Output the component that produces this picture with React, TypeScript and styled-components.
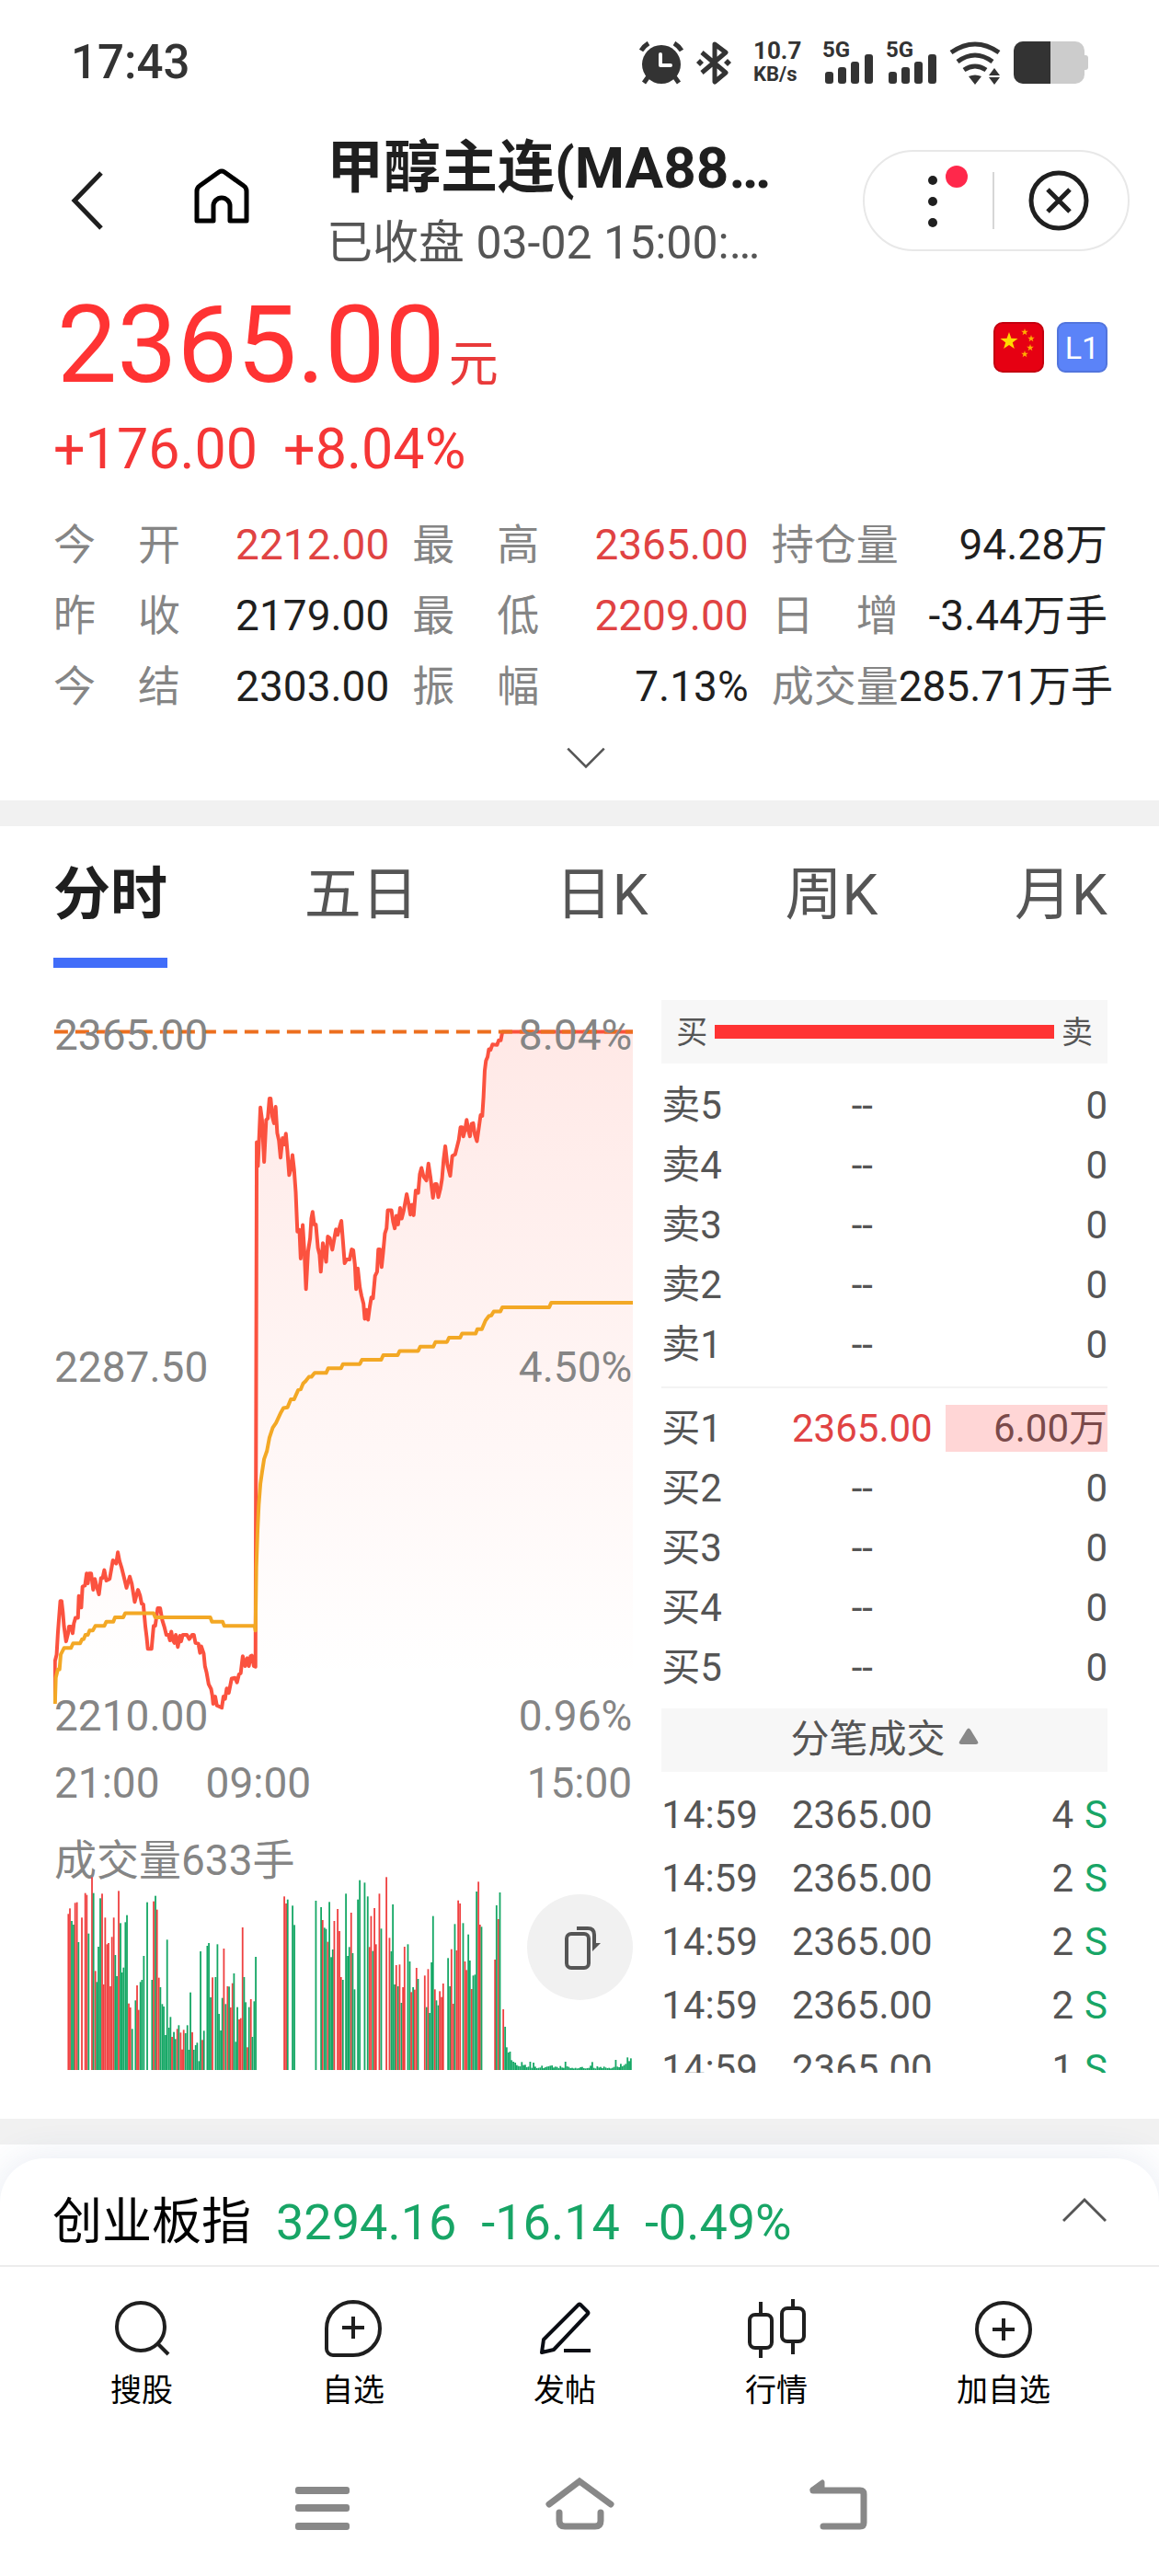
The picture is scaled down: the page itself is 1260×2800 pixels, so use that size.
import React from "react";
import styled, { createGlobalStyle, css } from "styled-components";

const color = {
  ink: "#1f1f1f",
  text: "#555555",
  muted: "#858585",
  rise: "#e93a3a",
  riseStrong: "#ff3333",
  fall: "#18a566",
  line: "#ececec",
  band: "#f1f1f1",
  panel: "#f7f7f7",
  accent: "#416df9",
  status: "#333333",
};

const GlobalStyle = createGlobalStyle`
  *, *::before, *::after { box-sizing: border-box; }
  body {
    margin: 0;
    background: #fff;
    color: ${color.ink};
    font-family: Roboto, "Noto Sans CJK SC", sans-serif;
  }
  button {
    margin: 0;
    padding: 0;
    border: 0;
    background: none;
    color: inherit;
    font: inherit;
    cursor: pointer;
  }
  svg { display: block; }
`;

const Page = styled.div`
  display: flex;
  flex-direction: column;
  overflow: hidden;
`;

/* ---------- status bar ---------- */

const StatusBar = styled.div`
  display: flex;
  align-items: center;
  justify-content: space-between;
  height: 136px;
  padding: 0 76px 0 77px;
  color: ${color.status};
`;

const Clock = styled.time`
  font-size: 51px;
  line-height: 60px;
  font-weight: 500;
`;

const StatusIcons = styled.div`
  display: flex;
  align-items: center;
`;

const StatusItem = styled.div<{ $before: number }>`
  margin-left: ${(p) => p.$before}px;
`;

const NetSpeed = styled.div`
  width: 56px;
  font-weight: 700;
  font-size: 26px;
  line-height: 26px;
  small {
    display: block;
    font-size: 22px;
    line-height: 26px;
  }
`;

const Signal = styled.div`
  width: 55px;
  font-weight: 700;
  font-size: 24px;
  line-height: 18px;
  svg { margin: -4px 0 0 3px; }
`;

/* ---------- header ---------- */

const Header = styled.header`
  display: flex;
  align-items: center;
  height: 166px;
  padding: 0 32px 2px 57px;
`;

const HeaderButton = styled.button`
  display: grid;
  place-items: center;
  width: 76px;
  height: 90px;
  margin-right: 70px;
`;

const TitleBlock = styled.div`
  flex: 1;
  min-width: 0;
  margin-left: 6px;
  padding-top: 6px;
  white-space: nowrap;
`;

const Title = styled.h1`
  margin: 0;
  font-size: 62px;
  line-height: 86px;
  font-weight: 700;
`;

const Subtitle = styled.p`
  margin: 0;
  font-size: 50px;
  line-height: 76px;
  color: ${color.text};
`;

const Capsule = styled.div`
  display: flex;
  align-items: center;
  width: 290px;
  height: 110px;
  padding-right: 6px;
  border: 2px solid #e8e8e8;
  border-radius: 55px;
`;

const CapsuleButton = styled.button`
  flex: 1;
  display: grid;
  place-items: center;
  height: 100%;
`;

const CapsuleDivider = styled.span`
  width: 2px;
  height: 62px;
  background: #d6d6d6;
`;

/* ---------- quote ---------- */

const Quote = styled.section`
  padding: 0 56px 0 58px;
`;

const PriceRow = styled.div`
  display: flex;
  align-items: center;
  justify-content: space-between;
`;

const Price = styled.div`
  padding-left: 4px;
  font-size: 116px;
  line-height: 146px;
  color: ${color.riseStrong};
  small {
    margin-left: 4px;
    font-size: 54px;
    line-height: 60px;
    color: ${color.rise};
  }
`;

const Badges = styled.div`
  display: flex;
  gap: 14px;
  padding-top: 4px;
`;

const LevelBadge = styled.span`
  width: 55px;
  height: 55px;
  border: 2px solid #5275dd;
  border-radius: 9px;
  background: #5b83f8;
  color: #fff;
  font-size: 34px;
  line-height: 52px;
  text-align: center;
`;

const Change = styled.div`
  display: flex;
  gap: 28px;
  font-size: 61px;
  line-height: 80px;
  color: #f53636;
`;

const Stats = styled.dl`
  display: grid;
  grid-template-columns: repeat(3, minmax(0, 1fr));
  column-gap: 25px;
  margin: 26px 0 0;
  font-size: 46px;
  line-height: 77px;
`;

const Stat = styled.div`
  display: flex;
  justify-content: space-between;
  white-space: nowrap;
  dt {
    flex: none;
    width: 138px;
    color: ${color.muted};
    text-align-last: justify;
  }
`;

const StatValue = styled.dd<{ $rise?: boolean }>`
  margin: 0;
  color: ${(p) => (p.$rise ? "#e04343" : color.ink)};
`;

const ExpandButton = styled.button`
  display: grid;
  place-items: center;
  width: 100%;
  height: 77px;
  margin-bottom: 8px;
  padding-left: 12px;
`;

const Band = styled.div`
  height: 28px;
  background: ${color.band};
`;

/* ---------- tabs ---------- */

const Tabs = styled.nav`
  display: flex;
  justify-content: space-between;
  padding: 0 56px 0 58px;
`;

const Tab = styled.button<{ $active?: boolean }>`
  height: 154px;
  padding-top: 6px;
  border-bottom: 11px solid transparent;
  font-size: 62px;
  line-height: 90px;
  color: ${color.text};
  ${(p) =>
    p.$active &&
    css`
      border-color: ${color.accent};
      color: ${color.ink};
      font-weight: 700;
    `}
`;

/* ---------- market ---------- */

const Market = styled.section`
  display: grid;
  grid-template-columns: minmax(0, 13fr) minmax(0, 10fr);
  column-gap: 31px;
  padding: 35px 56px 50px 58px;
`;

const ChartColumn = styled.div`
  padding-top: 11px;
  font-size: 46px;
  line-height: 54px;
  color: ${color.muted};
`;

const PriceChart = styled.div`
  position: relative;
  svg {
    width: 100%;
    height: 794px;
  }
`;

const AxisLabel = styled.span<{ $at: "top" | "middle" | "bottom"; $side: "left" | "right" }>`
  position: absolute;
  ${(p) => p.$side}: 1px;
  ${(p) => p.$at === "top" && "top: 0;"}
  ${(p) => p.$at === "middle" && "top: calc(49% - 28px);"}
  ${(p) => p.$at === "bottom" && "bottom: 0;"}
`;

const TimeAxis = styled.div`
  display: flex;
  gap: 50px;
  margin: 19px 0 34px;
  padding: 0 1px;
  span:last-child { margin-left: auto; }
`;

const VolumeTitle = styled.div`
  line-height: 46px;
  padding-left: 1px;
`;

const VolumeChart = styled.div`
  position: relative;
  > svg {
    width: 100%;
    height: 206px;
    overflow: visible;
  }
`;

const RotateButton = styled.button`
  position: absolute;
  top: 14px;
  right: 0;
  display: grid;
  place-items: center;
  width: 115px;
  height: 115px;
  border-radius: 50%;
  background: #f1f1f1;
`;

/* ---------- order book ---------- */

const Book = styled.div`
  font-size: 42px;
  color: ${color.text};
`;

const Ratio = styled.div`
  display: flex;
  align-items: center;
  gap: 8px;
  height: 69px;
  padding: 0 16px;
  background: ${color.panel};
  font-size: 34px;
  line-height: 66px;
`;

const RatioBar = styled.span`
  flex: 1;
  height: 15px;
  background: ${color.riseStrong};
`;

const Levels = styled.table<{ $row: number }>`
  width: 100%;
  border-collapse: collapse;
  table-layout: fixed;
  line-height: 51px;
  td, th {
    height: ${(p) => p.$row}px;
    padding: 0;
    font-weight: 400;
    text-align: left;
    white-space: nowrap;
  }
  th { width: 29%; }
`;

const PriceCell = styled.td<{ $rise?: boolean }>`
  && {
    width: 32%;
    text-align: center;
  }
  color: ${(p) => (p.$rise ? "#e04343" : "inherit")};
`;

const QtyCell = styled.td`
  && {
    padding-left: 13px;
    text-align: right;
  }
`;

const Depth = styled.span<{ $filled?: boolean }>`
  display: block;
  ${(p) =>
    p.$filled &&
    css`
      background: #ffd6d6;
      color: #7a4a4a;
    `}
`;

const SellSide = styled.div`
  padding: 13px 0;
  border-bottom: 2px solid #f3f3f3;
`;

const BuySide = styled.div`
  padding: 11px 0 12px;
`;

const TradesToggle = styled.button`
  display: flex;
  align-items: center;
  justify-content: center;
  gap: 14px;
  width: 100%;
  height: 69px;
  padding-bottom: 10px;
  background: ${color.panel};
`;

const Trades = styled.div`
  height: 327px;
  padding-top: 12px;
  overflow: hidden;
`;

const Side = styled.span`
  margin-left: 12px;
  color: ${color.fall};
`;

/* ---------- bottom sheet ---------- */

const Sheet = styled.footer`
  margin-top: 15px;
  border-radius: 48px 48px 0 0;
  background: #fff;
  box-shadow: 0 0 40px rgba(50, 80, 150, 0.12);
`;

const IndexRow = styled.div`
  display: flex;
  align-items: flex-start;
  gap: 27px;
  height: 118px;
  padding: 38px 57px 0;
  border-bottom: 2px solid ${color.line};
  font-size: 54px;
  line-height: 64px;
  color: ${color.fall};
  white-space: nowrap;
`;

const IndexName = styled.span`
  color: #000;
`;

const SheetToggle = styled.button`
  display: grid;
  place-items: center;
  height: 36px;
  margin-left: auto;
`;

const Actions = styled.nav`
  display: flex;
  justify-content: space-between;
  padding: 35px 118px 0 120px;
`;

const Action = styled.button`
  display: flex;
  flex-direction: column;
  align-items: center;
  gap: 13px;
  font-size: 34px;
  line-height: 44px;
  color: #000;
`;

const SystemNav = styled.div`
  display: flex;
  justify-content: center;
  gap: 200px;
  padding: 71px 0 45px;
  color: #888;
`;

/* ---------- data ---------- */

const stats: { name: string; value: string; rise?: boolean }[] = [
  { name: "今开", value: "2212.00", rise: true },
  { name: "最高", value: "2365.00", rise: true },
  { name: "持仓量", value: "94.28万" },
  { name: "昨收", value: "2179.00" },
  { name: "最低", value: "2209.00", rise: true },
  { name: "日增", value: "-3.44万手" },
  { name: "今结", value: "2303.00" },
  { name: "振幅", value: "7.13%" },
  { name: "成交量", value: "285.71万手" },
];

const tabs = ["分时", "五日", "日K", "周K", "月K"];

type Level = { name: string; price: string; qty: string; filled?: boolean };

const sells: Level[] = ["卖5", "卖4", "卖3", "卖2", "卖1"].map((name) => ({ name, price: "--", qty: "0" }));

const buys: Level[] = [
  { name: "买1", price: "2365.00", qty: "6.00万", filled: true },
  { name: "买2", price: "--", qty: "0" },
  { name: "买3", price: "--", qty: "0" },
  { name: "买4", price: "--", qty: "0" },
  { name: "买5", price: "--", qty: "0" },
];

const trades = ["4", "2", "2", "2", "1"];

const nightPrice =
  "133,2772 134,2647 138,2627 141,2562 144,2512 147,2464 150,2464 153,2497 156,2542 161,2587 166,2562 168,2542 173,2542 177,2562 180,2532 184,2515 190,2515 192,2449 198,2484 201,2420 207,2417 211,2380 214,2410 217,2380 222,2380 227,2430 231,2397 236,2422 241,2444 246,2394 250,2394 254,2370 259,2402 267,2397 275,2340 283,2350 287,2316 291,2342 296,2362 302,2392 308,2424 316,2390 321,2412 328,2467 336,2430 341,2447 345,2472 349,2474 354,2542 357,2572 360,2610 369,2610 374,2540 378,2540 384,2486 390,2486 395,2522 400,2542 405,2567 410,2567 414,2584 417,2557 421,2584 425,2592 428,2567 433,2604 438,2570 441,2587 445,2567 455,2567 461,2580 468,2567 472,2567 476,2592 483,2594 487,2622 490,2602 496,2624 499,2662 503,2682 508,2717 514,2732 517,2752 519,2777 524,2755 528,2782 540,2789 544,2755 548,2762 552,2730 557,2744 564,2700 572,2698 577,2712 582,2687 586,2684 591,2632 597,2662 602,2638 606,2662 610,2632 613,2630 618,2662 622,2664";

const dayPrice =
  "625,1068 628,1140 634,962 638,1000 643,1128 648,1000 652,995 656,935 659,935 663,990 667,1010 671,960 675,1040 679,1062 683,1115 688,1055 692,1075 696,1042 700,1100 704,1168 708,1150 712,1107 716,1150 720,1220 724,1340 729,1335 732,1422 737,1320 741,1400 745,1515 750,1400 755,1360 758,1300 761,1280 765,1318 769,1318 774,1390 778,1410 781,1462 786,1375 790,1400 794,1432 798,1355 803,1360 809,1395 814,1360 818,1333 822,1350 827,1325 831,1307 835,1370 839,1436 844,1425 851,1425 856,1394 860,1396 864,1440 867,1515 871,1452 876,1510 880,1535 885,1560 888,1605 892,1578 896,1608 900,1570 904,1540 908,1543 913,1475 918,1462 921,1394 925,1394 929,1448 933,1400 937,1345 941,1330 944,1275 953,1275 957,1310 961,1330 965,1292 969,1318 974,1268 978,1300 983,1275 990,1226 994,1250 999,1288 1003,1258 1007,1290 1012,1215 1018,1222 1022,1165 1026,1146 1031,1172 1038,1184 1043,1133 1048,1175 1054,1237 1059,1195 1063,1195 1067,1235 1072,1210 1076,1180 1080,1120 1084,1080 1089,1135 1096,1170 1101,1110 1108,1105 1113,1080 1117,1060 1121,1022 1125,1022 1128,1050 1132,1030 1136,1000 1140,1030 1144,1050 1148,1012 1152,1010 1156,1045 1161,1065 1165,1030 1170,985 1174,988 1177,930 1180,850 1183,820 1187,808 1190,785 1194,787 1199,770 1210,772 1214,758 1219,758 1223,732 1541,732";

const averagePrice =
  "134,2777 136,2697 141,2672 145,2672 148,2627 156,2607 173,2607 178,2593 195,2593 200,2580 204,2580 208,2567 214,2567 218,2554 226,2554 232,2540 254,2540 259,2527 276,2527 280,2514 300,2514 305,2501 374,2501 378,2514 512,2514 516,2527 542,2527 546,2540 620,2540 622,2554 624,2362 627,2252 630,2172 634,2107 638,2072 643,2032 650,2007 656,1967 664,1937 672,1922 684,1890 690,1877 700,1875 708,1850 716,1850 726,1822 732,1820 738,1802 744,1795 752,1782 758,1782 766,1770 794,1770 799,1756 830,1756 835,1743 876,1743 881,1730 928,1730 933,1716 968,1716 973,1703 1018,1703 1023,1690 1055,1690 1060,1676 1088,1676 1093,1663 1120,1663 1125,1650 1158,1650 1162,1637 1173,1637 1182,1610 1190,1597 1196,1595 1202,1583 1218,1583 1223,1570 1337,1570 1342,1556 1541,1556";

/* One entry per minute: direction, x, top of the bar. */
const volumeNight =
  "r43,148 r48,130 g54,171 g60,183 r65,112 r71,110 g76,240 r87,160 r98,80 r103,86 g109,212 r120,28 g125,80 r131,334 g136,370 g141,255 g147,97 r153,82 r158,378 r163,160 r169,247 r174,243 r180,384 r185,223 r191,160 g196,282 g201,351 r207,73 g213,178 g218,339 g223,323 g229,175 g234,152 r240,440 r245,453 g251,523 g262,430 r267,381 r272,461 g278,370 g283,363 g289,285 g300,110 g316,363 r321,107 g327,89 r332,134 r338,356 g343,387 g349,442 g354,450 g360,543 g365,232 g371,519 g376,484 r381,549 g387,533 g392,556 r398,523 g403,511 r409,535 r414,590 r419,526 g425,537 g431,511 g436,591 g441,404 r447,534 g452,591 g458,576 g463,568 g469,628 g474,270 r480,559 g485,529 g496,252 g501,243 g507,420 r513,355 g523,354 g529,247 g534,474 g540,528 g545,422 r550,261 g556,442 r562,384 g567,385 r572,453 r578,374 g583,342 g589,565 g594,452 r600,492 r605,488 r611,192 g616,354 g621,436 r627,583 g632,452 r638,426 g643,549 g649,433 g654,288";

const volumeDay =
  "r747,91 r753,114 g758,101 g774,121 g780,184 g850,105 g867,126 r872,168 g878,193 g883,197 r889,239 g894,109 g900,289 g905,264 r910,171 r921,132 r927,204 r932,354 g938,363 g948,82 g954,285 g959,256 r965,144 g970,276 g976,394 g987,101 g993,38 g1009,46 g1019,91 r1025,256 r1030,155 g1036,269 r1041,129 r1046,247 r1057,82 g1063,196 r1080,28 r1090,226 g1096,270 g1101,117 g1107,378 r1112,315 g1118,384 r1123,313 g1129,438 r1134,387 r1139,255 g1150,247 g1156,303 r1161,403 g1167,387 r1172,395 r1178,324 g1183,360 r1205,349 g1211,452 r1216,328 g1221,471 g1227,306 g1232,155 r1238,394 g1243,430 g1249,446 r1254,400 r1260,419 r1265,375 g1281,292 g1287,384 r1292,263 r1298,441 g1303,181 r1309,267 r1314,104 r1320,114 g1330,178 r1336,303 r1341,331 g1347,215 g1352,300 r1358,393 g1363,349 g1369,346 g1374,75 r1380,43 r1385,183 g1390,190 r1434,297 g1439,120 r1445,165 g1450,78 r1461,459 g1467,516 g1472,583 g1478,600 g1483,597 g1488,625 g1494,630 g1500,633";

/* Thin trading once the price is pinned at the limit. */
const volumeTail = [
  641, 644, 645, 631, 641, 640, 648, 646, 630, 650, 633, 646, 651, 650, 649, 643, 651, 648, 646, 645, 643, 642, 649,
  646, 647, 651, 644, 649, 650, 630, 645, 647, 651, 650, 652, 650, 652, 651, 648, 647, 651, 652, 651, 650, 643, 631,
  650, 652, 645, 649, 647, 651, 646, 649, 651, 650, 652, 650, 647, 624, 646, 648, 637, 645, 641, 637, 616, 628, 619,
];

const volumeBars = [
  ...`${volumeNight} ${volumeDay}`.split(" ").map((entry) => {
    const [x, top] = entry.slice(1).split(",").map(Number);
    return { x, top, up: entry[0] === "r" };
  }),
  ...volumeTail.map((top, i) => ({ x: 1505 + i * 5.47, top, up: false })),
];

const star = (cx: number, cy: number, r: number) =>
  Array.from({ length: 10 }, (_, i) => {
    const radius = i % 2 ? r * 0.4 : r;
    const angle = (Math.PI * i) / 5 - Math.PI / 2;
    return `${(cx + radius * Math.cos(angle)).toFixed(1)},${(cy + radius * Math.sin(angle)).toFixed(1)}`;
  }).join(" ");

/* ---------- icons ---------- */

const stroke = { fill: "none", stroke: "currentColor" } as const;

const AlarmIcon = () => (
  <svg width="48" height="47" viewBox="0 0 48 47" {...stroke}>
    <circle cx="24" cy="25" r="21" fill="currentColor" stroke="none" />
    <path d="M2 10 Q5 5 10 2M46 10 Q43 5 38 2M10 38 5 45M38 38l5 7" strokeWidth="5" />
    <path d="M23 14v12h11" stroke="#fff" strokeWidth="4" strokeLinecap="round" strokeLinejoin="round" />
  </svg>
);

const BluetoothIcon = () => (
  <svg width="38" height="47" viewBox="0 0 38 47" {...stroke}>
    <path d="M6 12 32 34 20 44V3l12 9L6 34" strokeWidth="5" strokeLinejoin="round" />
    <path d="m4 19 4 4-4 4-4-4zM34 19l4 4-4 4-4-4z" fill="currentColor" stroke="none" />
  </svg>
);

const SignalBars = () => (
  <svg width="52" height="32" viewBox="0 0 52 32" fill="currentColor">
    <rect x="0" y="19" width="9" height="13" rx="3" />
    <rect x="14" y="14" width="9" height="18" rx="3" />
    <rect x="28" y="8" width="9" height="24" rx="3" />
    <rect x="43" y="0" width="9" height="32" rx="3" />
  </svg>
);

const WifiIcon = () => (
  <svg width="56" height="47" viewBox="0 0 56 47" {...stroke} strokeWidth="5">
    <path d="M2 12Q28-6 54 12M9 22Q28 8 47 22M16 31q12-8 24 0" />
    <path d="M21 38q7-3 14 0l-7 9zM43 37l6-8 6 8zM43 39l6 8 6-8z" fill="currentColor" stroke="none" />
  </svg>
);

const BatteryIcon = () => (
  <svg width="82" height="46" viewBox="0 0 82 46">
    <rect x="74" y="15" width="7" height="16" rx="3" fill="#ccc" />
    <rect width="77" height="46" rx="10" fill="#ccc" />
    <path d="M10 0h30v46H10A10 10 0 0 1 0 36V10A10 10 0 0 1 10 0z" fill="currentColor" />
  </svg>
);

const BackIcon = () => (
  <svg width="36" height="66" viewBox="0 0 36 66" {...stroke} strokeWidth="5">
    <path d="M33 3 4 33l29 30" />
  </svg>
);

const HomeIcon = () => (
  <svg width="60" height="70" viewBox="0 0 60 70" fill="none" stroke="#000" strokeWidth="5" strokeLinejoin="round">
    <path d="M27 4q3-2 6 0l21 15q3 2 3 6v32H39V41a9 9 0 0 0-18 0v16H3V25q0-4 3-6z" />
  </svg>
);

const MoreIcon = () => (
  <svg width="84" height="80" viewBox="0 0 84 80">
    <g fill={color.ink}>
      <circle cx="46" cy="18" r="5" />
      <circle cx="46" cy="41" r="5" />
      <circle cx="46" cy="64" r="5" />
    </g>
    <circle cx="72" cy="14" r="12" fill="#ff284b" />
  </svg>
);

const CloseIcon = () => (
  <svg width="66" height="66" viewBox="0 0 66 66" {...stroke} strokeWidth="5">
    <circle cx="33" cy="33" r="30" />
    <path d="m21 21 24 24M45 21 21 45" />
  </svg>
);

const FlagIcon = () => (
  <svg width="55" height="55" viewBox="0 0 55 55" role="img" aria-label="CN">
    <rect x="1" y="1" width="53" height="53" rx="9" fill="#e60012" stroke="#c4000f" strokeWidth="2" />
    <polygon points={star(17, 21, 10)} fill="#ffd800" />
    {[[34, 11], [41, 18], [40, 28], [34, 35]].map(([x, y]) => (
      <polygon key={y} points={star(x, y, 4)} fill="#ffb000" />
    ))}
  </svg>
);

const ChevronIcon = ({ up }: { up?: boolean }) => (
  <svg width={up ? 48 : 42} height={up ? 28 : 24} viewBox="0 0 48 28" {...stroke} stroke="#555" strokeWidth="3">
    <path d={up ? "M1 26 24 3l23 23" : "M1 2l23 23L47 2"} />
  </svg>
);

const RotateIcon = () => (
  <svg width="46" height="50" viewBox="0 0 46 50" fill="none" stroke="#555" strokeWidth="4">
    <rect x="8" y="10" width="24" height="37" rx="5" />
    <path d="M19 4h12q7 0 7 7v12" />
    <path d="M36 20h9l-9 9z" fill="#555" stroke="none" />
  </svg>
);

const actionIcon = { width: 64, height: 64, viewBox: "0 0 64 64", fill: "none", stroke: color.ink, strokeWidth: 4 } as const;

const SearchIcon = () => (
  <svg {...actionIcon}>
    <circle cx="31" cy="30" r="26" />
    <path d="m50 49 11 11" />
  </svg>
);

const WatchlistIcon = () => (
  <svg {...actionIcon}>
    <path d="M32 3a29 29 0 0 1 0 58H10a7 7 0 0 1-7-7V32A29 29 0 0 1 32 3z" />
    <path d="M32 19v24M20 31h24" />
  </svg>
);

const PostIcon = () => (
  <svg {...actionIcon} stroke="#0a0d14">
    <path d="M7 58 9 44 47 6q1-1 2 0l8 8q1 1 0 2L20 55z" strokeLinejoin="round" />
    <path d="M31 56h29" />
  </svg>
);

const CandlesIcon = () => (
  <svg {...actionIcon}>
    <rect x="3" y="17" width="24" height="36" rx="6" />
    <rect x="38" y="10" width="24" height="36" rx="6" />
    <path d="M15 3v14M15 53v11M50 0v10M50 46v14" />
  </svg>
);

const AddIcon = () => (
  <svg {...actionIcon}>
    <circle cx="32" cy="33" r="29" />
    <path d="M32 21v24M20 33h24" />
  </svg>
);

const actions = [
  { label: "搜股", Icon: SearchIcon },
  { label: "自选", Icon: WatchlistIcon },
  { label: "发帖", Icon: PostIcon },
  { label: "行情", Icon: CandlesIcon },
  { label: "加自选", Icon: AddIcon },
];

/* ---------- parts ---------- */

const LevelTable = ({ rows }: { rows: Level[] }) => (
  <Levels $row={65}>
    <tbody>
      {rows.map((row) => (
        <tr key={row.name}>
          <th scope="row">{row.name}</th>
          <PriceCell $rise={row.filled}>{row.price}</PriceCell>
          <QtyCell>
            <Depth $filled={row.filled}>{row.qty}</Depth>
          </QtyCell>
        </tr>
      ))}
    </tbody>
  </Levels>
);

const PriceCurve = () => (
  <svg viewBox="130 666 1411 2223" preserveAspectRatio="none" fill="none" aria-hidden="true">
    <defs>
      <linearGradient id="fade" gradientUnits="userSpaceOnUse" x1="0" y1="732" x2="0" y2="2700">
        <stop offset="0" stopColor="#ff5340" stopOpacity="0.13" />
        <stop offset="1" stopColor="#ff5340" stopOpacity="0" />
      </linearGradient>
    </defs>
    <polygon points={`133,2889 ${nightPrice} ${dayPrice} 1541,2889`} fill="url(#fade)" />
    <g strokeWidth="4" strokeLinejoin="round">
      <polyline points={`${nightPrice} ${dayPrice}`} stroke="#fb523f" vectorEffect="non-scaling-stroke" />
      <polyline points={averagePrice} stroke="#f3a825" vectorEffect="non-scaling-stroke" />
      <path d="M132 732H1541" stroke="#ec6f1f" strokeDasharray="15 8" vectorEffect="non-scaling-stroke" />
    </g>
  </svg>
);

const VolumeBars = () => (
  <svg viewBox="-6 42 1890 618" preserveAspectRatio="none" aria-hidden="true">
    {volumeBars.map((bar) => (
      <rect
        key={bar.x}
        x={bar.x - 2.7}
        y={bar.top}
        width="5.4"
        height={657 - bar.top}
        fill={bar.up ? "#ef4040" : "#15a765"}
      />
    ))}
  </svg>
);

export default function App() {
  return (
    <Page>
      <GlobalStyle />

      <StatusBar>
        <Clock>17:43</Clock>
        <StatusIcons>
          <StatusItem $before={0}><AlarmIcon /></StatusItem>
          <StatusItem $before={14}><BluetoothIcon /></StatusItem>
          <StatusItem $before={24}>
            <NetSpeed>10.7<small>KB/s</small></NetSpeed>
          </StatusItem>
          <StatusItem $before={19}><Signal>5G<SignalBars /></Signal></StatusItem>
          <StatusItem $before={14}><Signal>5G<SignalBars /></Signal></StatusItem>
          <StatusItem $before={14}><WifiIcon /></StatusItem>
          <StatusItem $before={14}><BatteryIcon /></StatusItem>
        </StatusIcons>
      </StatusBar>

      <Header>
        <HeaderButton aria-label="返回"><BackIcon /></HeaderButton>
        <HeaderButton aria-label="首页"><HomeIcon /></HeaderButton>
        <TitleBlock>
          <Title>甲醇主连(MA88…</Title>
          <Subtitle>已收盘 03-02 15:00:…</Subtitle>
        </TitleBlock>
        <Capsule>
          <CapsuleButton aria-label="更多"><MoreIcon /></CapsuleButton>
          <CapsuleDivider />
          <CapsuleButton aria-label="关闭"><CloseIcon /></CapsuleButton>
        </Capsule>
      </Header>

      <Quote>
        <PriceRow>
          <Price>2365.00<small>元</small></Price>
          <Badges>
            <FlagIcon />
            <LevelBadge>L1</LevelBadge>
          </Badges>
        </PriceRow>
        <Change>
          <span>+176.00</span>
          <span>+8.04%</span>
        </Change>
        <Stats>
          {stats.map((s) => (
            <Stat key={s.name}>
              <dt>{s.name}</dt>
              <StatValue $rise={s.rise}>{s.value}</StatValue>
            </Stat>
          ))}
        </Stats>
        <ExpandButton aria-label="展开"><ChevronIcon /></ExpandButton>
      </Quote>

      <Band />

      <Tabs>
        {tabs.map((t, i) => (
          <Tab key={t} $active={i === 0}>{t}</Tab>
        ))}
      </Tabs>

      <Market>
        <ChartColumn>
          <PriceChart>
            <PriceCurve />
            <AxisLabel $at="top" $side="left">2365.00</AxisLabel>
            <AxisLabel $at="top" $side="right">8.04%</AxisLabel>
            <AxisLabel $at="middle" $side="left">2287.50</AxisLabel>
            <AxisLabel $at="middle" $side="right">4.50%</AxisLabel>
            <AxisLabel $at="bottom" $side="left">2210.00</AxisLabel>
            <AxisLabel $at="bottom" $side="right">0.96%</AxisLabel>
          </PriceChart>
          <TimeAxis>
            <span>21:00</span>
            <span>09:00</span>
            <span>15:00</span>
          </TimeAxis>
          <VolumeTitle>成交量633手</VolumeTitle>
          <VolumeChart>
            <VolumeBars />
            <RotateButton aria-label="横屏"><RotateIcon /></RotateButton>
          </VolumeChart>
        </ChartColumn>

        <Book>
          <Ratio>
            <span>买</span>
            <RatioBar />
            <span>卖</span>
          </Ratio>
          <SellSide><LevelTable rows={sells} /></SellSide>
          <BuySide><LevelTable rows={buys} /></BuySide>
          <TradesToggle>
            分笔成交
            <svg width="22" height="18" viewBox="0 0 22 18" aria-hidden="true">
              <path d="M9 2q2-3 4 0l8 13q1 3-2 3H3q-3 0-2-3z" fill="#888" />
            </svg>
          </TradesToggle>
          <Trades>
            <Levels $row={69}>
              <tbody>
                {trades.map((qty, i) => (
                  <tr key={i}>
                    <th scope="row">14:59</th>
                    <PriceCell>2365.00</PriceCell>
                    <QtyCell>{qty}<Side>S</Side></QtyCell>
                  </tr>
                ))}
              </tbody>
            </Levels>
          </Trades>
        </Book>
      </Market>

      <Band />

      <Sheet>
        <IndexRow>
          <IndexName>创业板指</IndexName>
          <span>3294.16</span>
          <span>-16.14</span>
          <span>-0.49%</span>
          <SheetToggle aria-label="收起"><ChevronIcon up /></SheetToggle>
        </IndexRow>
        <Actions>
          {actions.map(({ label, Icon }) => (
            <Action key={label}>
              <Icon />
              {label}
            </Action>
          ))}
        </Actions>
        <SystemNav>
          <svg width="80" height="64" viewBox="0 0 80 64" fill="currentColor" aria-hidden="true">
            <rect x="11" y="12" width="59" height="8" rx="3" />
            <rect x="11" y="31" width="59" height="8" rx="3" />
            <rect x="11" y="51" width="59" height="8" rx="3" />
          </svg>
          <svg width="80" height="64" viewBox="0 0 80 64" {...stroke} strokeWidth="7" strokeLinecap="round" aria-hidden="true">
            <path d="M7 31 40 6l34 25M18 40v9q0 6 6 6h33q6 0 6-6v-9" />
          </svg>
          <svg width="80" height="64" viewBox="0 0 80 64" {...stroke} strokeWidth="7" strokeLinecap="round" strokeLinejoin="round" aria-hidden="true">
            <path d="M14 16h51q4 0 4 4v31q0 4-4 4H25" />
            <path d="M13 15 24 7v8z" fill="currentColor" strokeWidth="5" />
          </svg>
        </SystemNav>
      </Sheet>
    </Page>
  );
}
